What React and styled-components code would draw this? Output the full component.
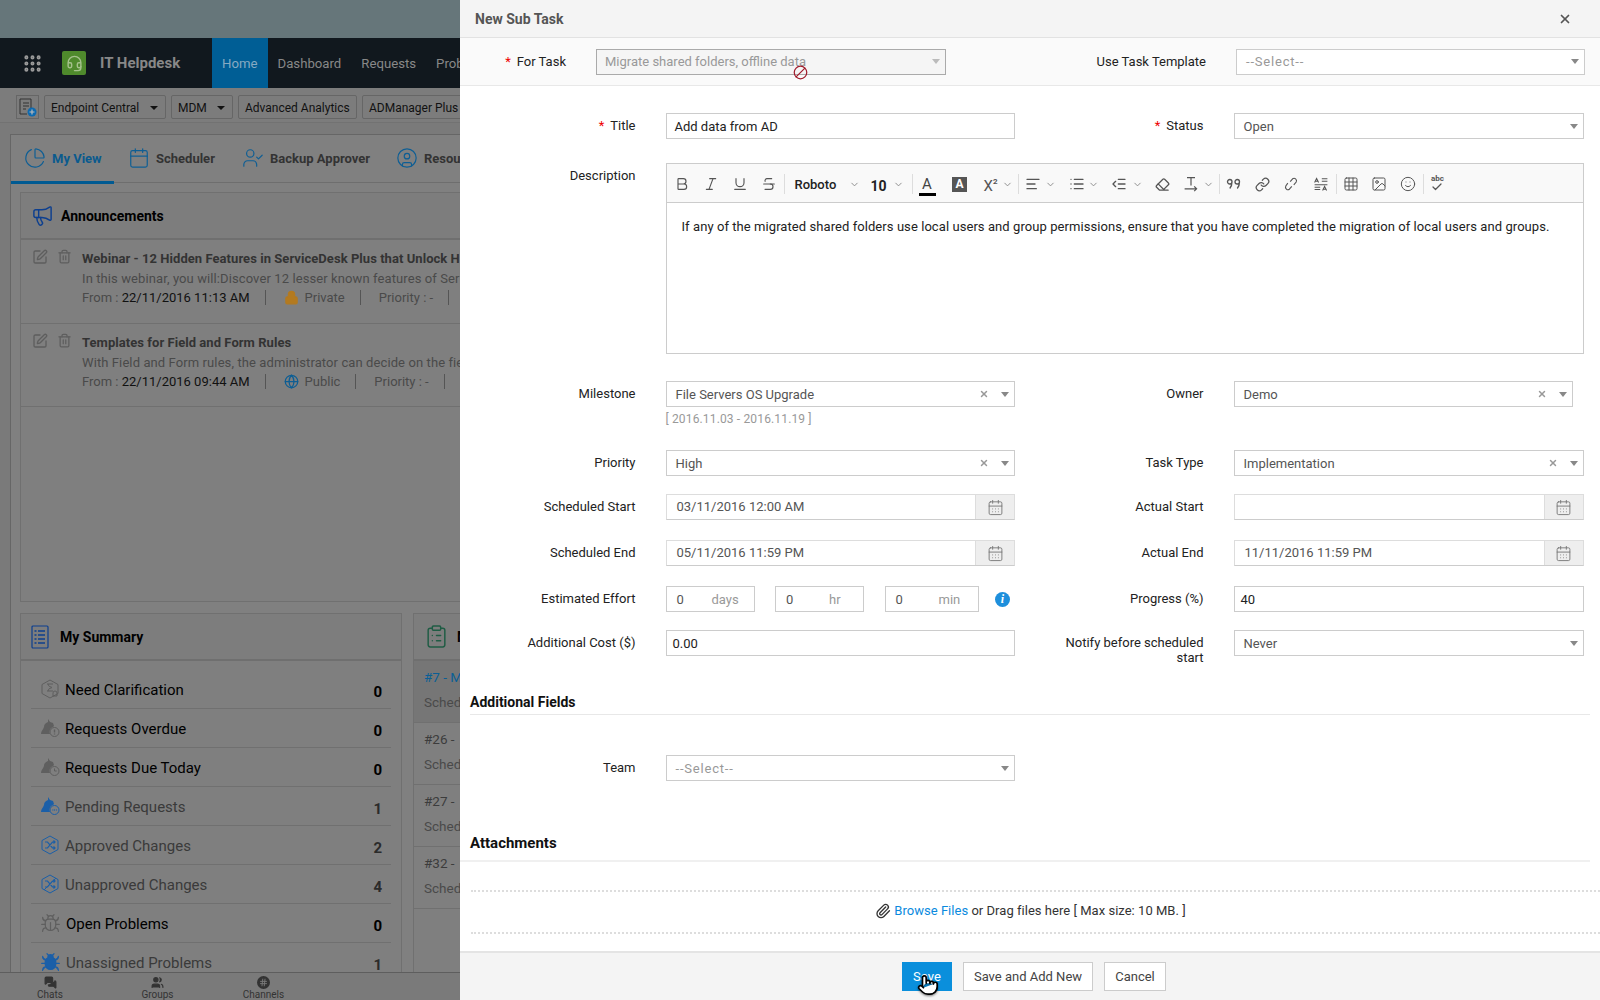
import styled, { createGlobalStyle } from 'styled-components'
import {
  Bold, Italic, Underline, Strikethrough, ChevronDown, AlignLeft, List, Outdent,
  Eraser, Link, Grid3x3, Image, Smile, Check, X, Ban, CalendarDays, Paperclip, Pointer,
  Grip, Headset, SquarePen, Trash2, Lock, Globe, ChartPie, Calendar, UserCheck, CircleUser, Megaphone,
  ClipboardList, MessagesSquare, Users, Hash, Bug,
} from 'lucide-react'

const GlobalStyle = createGlobalStyle`
  html, body { margin: 0; height: 100%; overflow: hidden; }
  body { font-family: Roboto, "Liberation Sans", sans-serif; font-size: 13px; color: #333; }
  * { box-sizing: border-box; }
`

const Screen = styled.div`
  display: flex;
  width: 1600px;
  height: 1000px;
  overflow: hidden;
`

/* ---- dimmed page behind the dialog ---- */

const Page = styled.div`
  display: flex;
  flex-direction: column;
  flex: none;
  width: 460px;
  height: 100%;
  overflow: hidden;
  background: #7a7a7a;
`
const TopBand = styled.div`
  flex: none;
  height: 38px;
  background: #66767a;
`
const Nav = styled.div`
  display: flex;
  flex: none;
  align-items: stretch;
  height: 50px;
  background: #11181e;
  color: #888;
  white-space: nowrap;
`
const NavGrid = styled.div`
  display: flex;
  flex: none;
  align-items: center;
  padding-left: 22px;
  width: 62px;
`
const NavBrand = styled.div`
  display: flex;
  flex: none;
  align-items: center;
  gap: 14px;
  width: 150px;
  font-size: 15px;
  font-weight: 700;
`
const LogoBox = styled.span`
  display: flex;
  align-items: center;
  justify-content: center;
  width: 24px;
  height: 24px;
  border-radius: 2px;
  background: #4f8a2c;
`
const NavItem = styled.div`
  display: flex;
  flex: none;
  align-items: center;
  padding: 0 ${(p) => (p.$last ? 0 : 10)}px 0 10px;
  font-size: 13.200px;
  color: ${(p) => (p.$active ? '#86aac2' : '#888')};
  background: ${(p) => (p.$active ? '#005e95' : 'transparent')};
`
const ShortcutBar = styled.div`
  display: flex;
  flex: none;
  align-items: flex-start;
  gap: 5px;
  height: 35px;
  padding: 7px 0 0 16px;
  background: #7c7c7c;
  border-bottom: 1px solid #727272;
`
const ShortcutIcon = styled.span`
  display: flex;
  flex: none;
  align-items: center;
  justify-content: center;
  width: 23px;
  height: 24px;
  border: 1px solid #666;
`
const Shortcut = styled.span`
  display: flex;
  flex: none;
  align-items: center;
  justify-content: space-between;
  width: ${(p) => p.$w}px;
  height: 24px;
  padding: 1px 7px 0 6px;
  border: 1px solid #666;
  border-radius: 2px;
  font-size: 12px;
  color: #111;
  white-space: nowrap;
`
const DarkCaret = styled.i`
  border-left: 4px solid transparent;
  border-right: 4px solid transparent;
  border-top: 4px solid #111;
`
const Body = styled.div`
  flex: 1;
  min-height: 0;
  padding: 11px 0 0 10px;
`
const TabCard = styled.div`
  width: 1000px;
  height: 100%;
  background: #808080;
  border: 1px solid #666;
  border-bottom: 0;
`
const Tabs = styled.div`
  display: flex;
  height: 48px;
  border-bottom: 1px solid #6e6e6e;
`
const Tab = styled.div`
  display: flex;
  flex: none;
  align-items: center;
  gap: 6px;
  width: ${(p) => p.$w}px;
  height: 49px;
  padding: 0 0 ${(p) => (p.$active ? 0 : 3)}px ${(p) => (p.$active ? 13 : 14)}px;
  font-size: 13px;
  font-weight: 700;
  color: ${(p) => (p.$active ? '#0a5a8e' : '#333')};
  border-bottom: ${(p) => (p.$active ? '3px solid #005a92' : '0')};
  white-space: nowrap;
  svg { color: #0e5e94; }
`
const Content = styled.div`
  display: flex;
  flex-direction: column;
  gap: 11px;
  height: 800px;
  padding: 9px 0 0 9px;
`
const Panel = styled.div`
  flex: none;
  overflow: hidden;
  width: ${(p) => (p.$w ? `${p.$w}px` : 'auto')};
  height: ${(p) => (p.$h ? `${p.$h}px` : 'auto')};
  background: #7f7f7f;
  border: 1px solid #707070;
`
const PanelHead = styled.div`
  display: flex;
  align-items: center;
  gap: ${(p) => p.$gap || 7}px;
  height: 47px;
  padding-left: 10px;
  background: #7d7d7d;
  border-bottom: 2px solid #6f6f6f;
  font-size: 14px;
  font-weight: 700;
  color: #000;
`
const Notice = styled.div`
  display: flex;
  height: ${(p) => p.$h}px;
  padding: 9px 0 0 11px;
  border-bottom: 1px solid #707070;
`
const NoticeTools = styled.div`
  display: flex;
  gap: 9px;
  width: 50px;
  color: #5e5e5e;
`
const NoticeText = styled.div`
  white-space: nowrap;
  line-height: 20px;
  color: #4a4a4a;
`
const NoticeTitle = styled.div`
  font-weight: 700;
  color: #333;
  letter-spacing: 0.050px;
`
const NoticeDesc = styled.div`
  letter-spacing: 0.100px;
`
const NoticeMeta = styled.div`
  display: flex;
  align-items: center;
  margin-top: 1px;
  b { font-weight: 400; color: #111; }
`
const MetaPart = styled.span`
  display: flex;
  align-items: center;
  gap: 6px;
  height: 15px;
  padding: 0 15px 0 ${(p) => (p.$first ? 0 : 18)}px;
  border-left: ${(p) => (p.$first ? '0' : '1px solid #555')};
`
const PanelRow = styled.div`
  display: flex;
  gap: 11px;
  height: 400px;
`
const SummaryList = styled.div`
  padding: 9px 10px 0;
`
const SummaryRow = styled.div`
  display: flex;
  align-items: center;
  height: 39px;
  padding: 0 9px;
  border-bottom: 1px solid #707070;
  font-size: 15px;
  color: ${(p) => (p.$zero ? '#000' : '#3a3a3a')};
  span { flex: 1; margin: 1px 0 0 5px; }
  b { font-weight: 700; margin-top: 5px; color: ${(p) => (p.$zero ? '#000' : '#2b2b2b')}; }
`
const TaskRow = styled.div`
  height: 62px;
  padding: 4px 0 0 10px;
  border-bottom: 1px solid #707070;
  background: ${(p) => (p.$active ? '#767676' : 'transparent')};
  color: #4a4a4a;
  line-height: 25px;
  font-size: 13.500px;
  p { margin: 0; color: ${(p) => (p.$active ? '#0a5f95' : '#3c3c3c')}; }
`
const BottomBar = styled.div`
  display: flex;
  flex: none;
  height: 28px;
  padding-left: 16px;
  background: #7a7a7a;
  border-top: 1px solid #5e5e5e;
`
const BottomItem = styled.div`
  display: flex;
  flex: none;
  flex-direction: column;
  align-items: center;
  width: ${(p) => p.$w}px;
  padding-top: 3px;
  font-size: 10px;
  line-height: 11px;
  color: #333;
`
const ChannelDot = styled.span`
  display: flex;
  align-items: center;
  justify-content: center;
  width: 13px;
  height: 13px;
  border-radius: 50%;
  background: #333;
  color: #7a7a7a;
`

/* ---- dialog ---- */

const Dialog = styled.div`
  display: flex;
  flex: none;
  flex-direction: column;
  width: 1140px;
  height: 100%;
  background: #fff;
`
const DialogHead = styled.div`
  display: flex;
  flex: none;
  align-items: center;
  justify-content: space-between;
  height: 38px;
  padding: 0 28px 0 15px;
  background: #f4f4f4;
  border-bottom: 1px solid #e2e2e2;
  font-size: 14px;
  font-weight: 700;
  color: #555;
  svg { color: #555; }
`
const TaskBar = styled.div`
  display: grid;
  flex: none;
  grid-template-columns: 106px 350px 230px 349px;
  align-items: center;
  column-gap: 30px;
  height: 48px;
  background: #fafafa;
  border-bottom: 1px solid #e8e8e8;
  em { margin-right: 4px; }
`
const Form = styled.div`
  flex: 1;
  min-height: 0;
  padding-top: 27px;
`
const Row = styled.div`
  display: grid;
  grid-template-columns: 175.500px 349.500px 158.500px 350px;
  column-gap: 30px;
  align-items: start;
  margin-top: ${(p) => p.$mt || 0}px;
`
const Label = styled.div`
  text-align: right;
  color: #222;
  line-height: ${(p) => (p.$wrap ? '15px' : '26px')};
  padding-top: ${(p) => (p.$wrap ? '5px' : '0')};
  em { font-style: normal; color: #e00; margin-right: 6px; }
`
const Cell = styled.div`
  min-width: 0;
  padding-right: ${(p) => p.$pr || 0}px;
`
const SelectBox = styled.div`
  position: relative;
  display: flex;
  align-items: center;
  height: 26px;
  padding-left: ${(p) => (p.$disabled ? 8 : 9)}px;
  background: ${(p) => (p.$disabled ? '#f5f5f5' : '#fff')};
  border: 1px solid ${(p) => (p.$disabled ? '#aaa' : '#ccc')};
  color: ${(p) => (p.$disabled || p.$placeholder ? '#999' : '#555')};
`
const SelectValue = styled.span`
  flex: 1;
  letter-spacing: ${(p) => (p.$placeholder ? '0.800px' : '0')};
`
const ClearMark = styled.span`
  display: flex;
  margin-right: 12px;
  color: #999;
`
const Caret = styled.i`
  margin-right: 5px;
  border-left: 4px solid transparent;
  border-right: 4px solid transparent;
  border-top: 5px solid ${(p) => (p.$light ? '#bbb' : '#888')};
`
const NoEntry = styled.span`
  position: absolute;
  left: 196px;
  top: 15px;
  display: flex;
  color: #a01c2c;
  transform: scaleX(-1);
`
const TextBox = styled.div`
  display: flex;
  align-items: center;
  height: 26px;
  padding-left: ${(p) => p.$pl || 6}px;
  border: 1px solid #ccc;
  color: #222;
`
const Hint = styled.div`
  margin-top: 4px;
  line-height: 16px;
  font-size: 12px;
  letter-spacing: 0.150px;
  color: #999;
`
const DateBox = styled.div`
  display: flex;
  height: 26px;
  border: 1px solid #ddd;
  border-bottom-color: #ccc;
  color: #555;
`
const DateValue = styled.span`
  flex: 1;
  padding-left: 10px;
  line-height: 24px;
`
const DateButton = styled.span`
  display: flex;
  align-items: center;
  justify-content: center;
  width: 39px;
  background: #eee;
  border-left: 1px solid #ddd;
  color: #777;
`
const EffortRow = styled.div`
  display: flex;
  align-items: center;
  gap: 20.500px;
`
const EffortBox = styled.div`
  display: flex;
  align-items: center;
  width: ${(p) => p.$w}px;
  height: 26px;
  padding-left: 10px;
  border: 1px solid #ccc;
  color: #555;
  span { width: ${(p) => p.$gap}px; }
  u { text-decoration: none; color: #999; }
`
const InfoDot = styled.span`
  display: flex;
  align-items: center;
  justify-content: center;
  width: 15px;
  height: 15px;
  margin-left: -4px;
  border-radius: 50%;
  background: #1e8fdc;
  color: #fff;
  font: italic 700 12px "Liberation Serif", serif;
`
const Editor = styled.div`
  height: 191px;
  margin-right: -568.500px;
  border: 1px solid #ccc;
`
const EditorBar = styled.div`
  display: flex;
  align-items: center;
  height: 39px;
  padding: 2px 0 0 1px;
  background: #f9f9f9;
  border-bottom: 1px solid #ccc;
  color: #555;
`
const Tool = styled.span`
  display: flex;
  flex: none;
  align-items: center;
  justify-content: center;
  width: ${(p) => p.$w || 29}px;
`
const Drop = styled.span`
  display: flex;
  flex: none;
  align-items: center;
  justify-content: space-between;
  width: ${(p) => p.$w}px;
  padding: 0 ${(p) => p.$pr}px 0 ${(p) => p.$pl}px;
  font-weight: ${(p) => p.$weight || 400};
  font-size: ${(p) => p.$size || 13}px;
  color: #222;
  svg:last-child { color: #888; }
`
const SizeValue = styled.span`
  margin-top: 3px;
`
const Sep = styled.i`
  flex: none;
  width: 1px;
  height: 20px;
  background: #ddd;
`
const ColorA = styled.span`
  width: 17px;
  height: 20px;
  margin-top: 3px;
  text-align: center;
  font-size: 15px;
  line-height: 17px;
  color: #444;
  border-bottom: 3px solid #000;
`
const FillA = styled.span`
  width: 15px;
  height: 15px;
  text-align: center;
  font-size: 12px;
  font-weight: 700;
  line-height: 15px;
  background: #555;
  color: #fff;
`
const SuperX = styled.span`
  margin: 3px 0 0 4px;
  font-size: 15px;
  line-height: 18px;
  color: #555;
  sup { font-size: 8px; font-weight: 700; line-height: 0; vertical-align: 7px; }
`
const SpellMark = styled.span`
  display: flex;
  flex-direction: column;
  align-items: center;
  font-size: 8px;
  font-weight: 700;
  line-height: 8px;
  svg { margin-top: -2px; }
`
const EditorText = styled.div`
  padding: 15px;
  line-height: 18px;
  letter-spacing: 0.070px;
  color: #222;
`
const SectionHead = styled.div`
  margin: ${(p) => p.$mt}px 10px 0 ${(p) => (p.$full ? 0 : 10)}px;
  padding: 0 0 ${(p) => p.$pb}px ${(p) => (p.$full ? 10 : 0)}px;
  line-height: 20px;
  font-size: ${(p) => (p.$full ? 15 : 14)}px;
  font-weight: 700;
  color: #111;
  border-bottom: ${(p) => (p.$full ? '2px solid #f0f0f0' : '1px solid #e8e8e8')};
`
const DropZone = styled.div`
  display: flex;
  align-items: center;
  justify-content: center;
  gap: 3px;
  height: 44px;
  margin: 28px 0 0 11px;
  padding: 0 10px 3px 0;
  border-top: 2px dotted #ddd;
  border-bottom: 2px dotted #ddd;
  letter-spacing: 0.030px;
  color: #333;
  a { color: #0b8ade; }
`
const Footer = styled.div`
  display: flex;
  flex: none;
  align-items: center;
  gap: 11px;
  height: 49px;
  padding-left: 442px;
  background: #f4f4f4;
  border-top: 2px solid #e4e4e4;
`
const Button = styled.span`
  position: relative;
  display: flex;
  align-items: center;
  justify-content: center;
  width: ${(p) => p.$w}px;
  height: 29px;
  color: ${(p) => (p.$primary ? '#fff' : '#444')};
  background: ${(p) => (p.$primary ? '#0a8fdc' : '#fff')};
  border: 1px solid ${(p) => (p.$primary ? '#0a8fdc' : '#ccc')};
`
const HandCursor = styled.span`
  position: absolute;
  left: 14px;
  top: 11px;
  display: flex;
  color: #000;
  filter: drop-shadow(0 1px 1px rgba(0, 0, 0, 0.5));
  svg { fill: #fff; }
`

const sum = [
  ['Need Clarification', 0, 'hour'],
  ['Requests Overdue', 0, 'alert'],
  ['Requests Due Today', 0, 'clock'],
  ['Pending Requests', 1, 'pending'],
  ['Approved Changes', 2, 'shuffle'],
  ['Unapproved Changes', 4, 'unshuffle'],
  ['Open Problems', 0, 'bug'],
  ['Unassigned Problems', 1, 'bugfill'],
]

const grey = '#5f5f5f'
const blue = '#1b5fa8'

function SummaryIcon({ kind }) {
  if (kind === 'shuffle' || kind === 'unshuffle' || kind === 'hour') {
    const color = kind === 'hour' ? grey : blue
    return (
      <svg width="20" height="20" viewBox="0 0 20 20" fill="none" stroke={color} strokeWidth="1">
        <path d="M10 1l8 4.500v9L10 19l-8-4.500v-9z" />
        {kind === 'hour' ? (
          <path d="M7 5h6M7 12h6M8 5c0 3 4 3 4 3.500S8 9 8 12M13 14a2 2 0 1 1 4 0v3h-4z" />
        ) : (
          <path d="M5 7h2.500l5 6H15M5 13h2.500l5-6H15M13.500 5.500L15 7l-1.500 1.500M13.500 11.500L15 13l-1.500 1.500" strokeWidth="1.200" />
        )}
        {kind === 'unshuffle' && <path d="M4 16L16 4" />}
      </svg>
    )
  }
  if (kind === 'bug' || kind === 'bugfill') {
    const filled = kind === 'bugfill'
    return <Bug size={21} color={filled ? blue : grey} fill={filled ? blue : 'none'} strokeWidth={1.400} />
  }
  const color = kind === 'pending' ? blue : grey
  return (
    <svg width="20" height="20" viewBox="0 0 20 20">
      <path d="M8 1l2 3 3 1 1 3-1 1a5 5 0 0 0-3 7H1c0-3 2-4 3-7 0-3 2-4 4-5z" fill={color} />
      <circle cx="14.500" cy="14" r="4.500" fill="#7f7f7f" stroke={color} />
      {kind === 'alert' && <path d="M14.500 11.500v3M14.500 15.500v1" stroke={color} strokeWidth="1.400" />}
      {kind === 'clock' && <path d="M14.500 11.500V14h2.200" stroke={color} fill="none" />}
      {kind === 'pending' && <path d="M12.500 14h.8M14.200 14h.8M15.900 14h.8" stroke={color} strokeWidth="1.400" />}
    </svg>
  )
}

function PageBehind() {
  return (
    <Page>
      <TopBand />
      <Nav>
        <NavGrid><Grip size={21} color="#999" strokeWidth={2.600} /></NavGrid>
        <NavBrand>
          <LogoBox><Headset size={17} color="#a5c18c" /></LogoBox>
          IT Helpdesk
        </NavBrand>
        <NavItem $active>Home</NavItem>
        <NavItem>Dashboard</NavItem>
        <NavItem>Requests</NavItem>
        <NavItem $last>Prob</NavItem>
      </Nav>
      <ShortcutBar>
        <ShortcutIcon>
          <svg width="19" height="19" viewBox="0 0 19 19" fill="none" stroke="#333" strokeWidth="1">
            <path d="M2 1h11v9M2 1v15h7M5 5h6M5 8h6M5 11h3" />
            <circle cx="14" cy="14" r="4.500" fill="#0e6ab0" stroke="none" />
            <path d="M14 11.500v5M11.500 14h5" stroke="#bbb" strokeWidth="1.200" />
          </svg>
        </ShortcutIcon>
        <Shortcut $w={122}>Endpoint Central <DarkCaret /></Shortcut>
        <Shortcut $w={62}>MDM <DarkCaret /></Shortcut>
        <Shortcut $w={119}>Advanced Analytics</Shortcut>
        <Shortcut $w={120}>ADManager Plus</Shortcut>
      </ShortcutBar>
      <Body>
        <TabCard>
          <Tabs>
            <Tab $active $w={103}><ChartPie size={22} strokeWidth={1.300} />My View</Tab>
            <Tab $w={114}><Calendar size={22} strokeWidth={1.300} />Scheduler</Tab>
            <Tab $w={154}><UserCheck size={22} strokeWidth={1.300} />Backup Approver</Tab>
            <Tab $w={80}><CircleUser size={22} strokeWidth={1.300} />Resou</Tab>
          </Tabs>
          <Content>
            <Panel $h={410}>
              <PanelHead><Megaphone size={23} color="#0d3f8f" strokeWidth={1.500} />Announcements</PanelHead>
              <Notice $h={84}>
                <NoticeTools><SquarePen size={16} /><Trash2 size={15} /></NoticeTools>
                <NoticeText>
                  <NoticeTitle>Webinar - 12 Hidden Features in ServiceDesk Plus that Unlock H</NoticeTitle>
                  <NoticeDesc>In this webinar, you will:Discover 12 lesser known features of Ser</NoticeDesc>
                  <NoticeMeta>
                    <MetaPart $first><span>From : <b>22/11/2016 11:13 AM</b></span></MetaPart>
                    <MetaPart><Lock size={15} color="#b37a20" fill="#b37a20" />Private</MetaPart>
                    <MetaPart>Priority : -</MetaPart>
                    <MetaPart />
                  </NoticeMeta>
                </NoticeText>
              </Notice>
              <Notice $h={83}>
                <NoticeTools><SquarePen size={16} /><Trash2 size={15} /></NoticeTools>
                <NoticeText>
                  <NoticeTitle>Templates for Field and Form Rules</NoticeTitle>
                  <NoticeDesc>With Field and Form rules, the administrator can decide on the fie</NoticeDesc>
                  <NoticeMeta>
                    <MetaPart $first><span>From : <b>22/11/2016 09:44 AM</b></span></MetaPart>
                    <MetaPart><Globe size={15} color="#0e5e94" />Public</MetaPart>
                    <MetaPart>Priority : -</MetaPart>
                    <MetaPart />
                  </NoticeMeta>
                </NoticeText>
              </Notice>
            </Panel>
            <PanelRow>
              <Panel $w={382}>
                <PanelHead $gap={10}>
                  <svg width="19" height="24" viewBox="0 0 19 24" fill="none" stroke="#0d3f8f" strokeWidth="1.200">
                    <rect x="1" y="1" width="16" height="22" rx="1" />
                    <path d="M3.500 6h2M7 6h7M3.500 10h2M7 10h7M3.500 14h2M7 14h7M3.500 18h2M7 18h7" strokeWidth="1.500" />
                  </svg>
                  My Summary
                </PanelHead>
                <SummaryList>
                  {sum.map(([name, count, kind]) => (
                    <SummaryRow key={name} $zero={count === 0}>
                      <SummaryIcon kind={kind} />
                      <span>{name}</span>
                      <b>{count}</b>
                    </SummaryRow>
                  ))}
                </SummaryList>
              </Panel>
              <Panel $w={100}>
                <PanelHead $gap={8}><ClipboardList size={25} color="#1f5c44" strokeWidth={1.400} />M</PanelHead>
                <TaskRow $active><p>#7 - M</p>Sched</TaskRow>
                <TaskRow><p>#26 -</p>Sched</TaskRow>
                <TaskRow><p>#27 -</p>Sched</TaskRow>
                <TaskRow><p>#32 -</p>Sched</TaskRow>
              </Panel>
            </PanelRow>
          </Content>
        </TabCard>
      </Body>
      <BottomBar>
        <BottomItem $w={68}><MessagesSquare size={13} fill="#333" />Chats</BottomItem>
        <BottomItem $w={147}><Users size={13} fill="#333" />Groups</BottomItem>
        <BottomItem $w={65}><ChannelDot><Hash size={9} strokeWidth={2.500} /></ChannelDot>Channels</BottomItem>
      </BottomBar>
    </Page>
  )
}

function Select({ value, disabled, placeholder, clear, children }) {
  return (
    <SelectBox $disabled={disabled} $placeholder={placeholder}>
      <SelectValue $placeholder={placeholder}>{value}</SelectValue>
      {clear && <ClearMark><X size={10} strokeWidth={3.500} /></ClearMark>}
      <Caret $light={disabled} />
      {children}
    </SelectBox>
  )
}

function DateField({ value }) {
  return (
    <DateBox>
      <DateValue>{value}</DateValue>
      <DateButton><CalendarDays size={17} strokeWidth={1.300} /></DateButton>
    </DateBox>
  )
}

const chev = <ChevronDown size={11} />

function EditorToolbar() {
  return (
    <EditorBar>
      <Tool><Bold size={16} strokeWidth={1.700} /></Tool>
      <Tool><Italic size={16} strokeWidth={1.700} /></Tool>
      <Tool><Underline size={16} strokeWidth={1.700} /></Tool>
      <Tool><Strikethrough size={16} strokeWidth={1.700} /></Tool>
      <Sep />
      <Drop $w={79} $pl={10} $pr={4} $weight={500}>Roboto {chev}</Drop>
      <Drop $w={48} $pl={7} $pr={8} $weight={700} $size={14}><SizeValue>10</SizeValue>{chev}</Drop>
      <Sep />
      <Tool><ColorA>A</ColorA></Tool>
      <Tool $w={36}><FillA>A</FillA></Tool>
      <Drop $w={40} $pl={2} $pr={5}><SuperX>X<sup>2</sup></SuperX>{chev}</Drop>
      <Sep />
      <Drop $w={44} $pl={6} $pr={7}><AlignLeft size={16} color="#555" />{chev}</Drop>
      <Drop $w={44} $pl={6} $pr={8}><List size={16} color="#555" />{chev}</Drop>
      <Drop $w={42} $pl={4} $pr={6}><Outdent size={16} color="#555" />{chev}</Drop>
      <Tool $w={28}><Eraser size={15} /></Tool>
      <Drop $w={42} $pl={6} $pr={5}>
        <svg width="16" height="16" viewBox="0 0 20 20" fill="none" stroke="#555" strokeWidth="1.500">
          <path d="M5 2h10M10 2v10M2 16h15M14 13l3 3-3 3" />
        </svg>
        {chev}
      </Drop>
      <Sep />
      <Tool $w={28}>
        <svg width="15" height="12" viewBox="0 0 20 16" fill="none" stroke="#555" strokeWidth="1.800">
          <path d="M8 5a3 3 0 1 1-6 0 3 3 0 0 1 6 0c0 4-1 7-3 9M18 5a3 3 0 1 1-6 0 3 3 0 0 1 6 0c0 4-1 7-3 9" />
        </svg>
      </Tool>
      <Tool><Link size={15} /></Tool>
      <Tool>
        <svg width="16" height="16" viewBox="0 0 20 20" fill="none" stroke="#555" strokeWidth="1.400">
          <path d="M9 7l3-3.500c2.500-2 6 1 4.500 4L13.500 11M11 13l-3 3.500c-2.500 2-6-1-4.500-4L6 9" />
        </svg>
      </Tool>
      <Tool $w={30}>
        <svg width="16" height="16" viewBox="0 0 20 20" fill="none" stroke="#555" strokeWidth="1.300">
          <path d="M2 8l2.500-5L7 8M3 6.500h3M11 3.500h7M11 6.500h7M2 11h16M2 14h7M2 17h7M12 18l2.500-5 2.500 5M13 16.500h3" />
        </svg>
      </Tool>
      <Sep />
      <Tool $w={28}><Grid3x3 size={16} strokeWidth={1.500} /></Tool>
      <Tool><Image size={16} strokeWidth={1.500} /></Tool>
      <Tool><Smile size={16} strokeWidth={1.500} /></Tool>
      <Sep />
      <Tool $w={28}><SpellMark>abc<Check size={12} strokeWidth={2.500} /></SpellMark></Tool>
    </EditorBar>
  )
}

function App() {
  return (
    <Screen>
      <GlobalStyle />
      <PageBehind />
      <Dialog>
        <DialogHead>New Sub Task <X size={14} strokeWidth={3} /></DialogHead>
        <TaskBar>
          <Label><em>*</em>For Task</Label>
          <Select value="Migrate shared folders, offline data" disabled>
            <NoEntry><Ban size={15} strokeWidth={2} /></NoEntry>
          </Select>
          <Label>Use Task Template</Label>
          <Select value="--Select--" placeholder />
        </TaskBar>
        <Form>
          <Row>
            <Label><em>*</em>Title</Label>
            <TextBox $pl={8}>Add data from AD</TextBox>
            <Label><em>*</em>Status</Label>
            <Select value="Open" />
          </Row>
          <Row $mt={24}>
            <Label>Description</Label>
            <Editor>
              <EditorToolbar />
              <EditorText>If any of the migrated shared folders use local users and group permissions, ensure that you have completed the migration of local users and groups.</EditorText>
            </Editor>
          </Row>
          <Row $mt={27}>
            <Label>Milestone</Label>
            <Cell>
              <Select value="File Servers OS Upgrade" clear />
              <Hint>[ 2016.11.03 - 2016.11.19 ]</Hint>
            </Cell>
            <Label>Owner</Label>
            <Cell $pr={11}><Select value="Demo" clear /></Cell>
          </Row>
          <Row $mt={23}>
            <Label>Priority</Label>
            <Select value="High" clear />
            <Label>Task Type</Label>
            <Select value="Implementation" clear />
          </Row>
          <Row $mt={18}>
            <Label>Scheduled Start</Label>
            <DateField value="03/11/2016 12:00 AM" />
            <Label>Actual Start</Label>
            <DateField value="" />
          </Row>
          <Row $mt={20}>
            <Label>Scheduled End</Label>
            <DateField value="05/11/2016 11:59 PM" />
            <Label>Actual End</Label>
            <DateField value="11/11/2016 11:59 PM" />
          </Row>
          <Row $mt={20}>
            <Label>Estimated Effort</Label>
            <EffortRow>
              <EffortBox $w={89} $gap={35}><span>0</span><u>days</u></EffortBox>
              <EffortBox $w={89} $gap={43}><span>0</span><u>hr</u></EffortBox>
              <EffortBox $w={94} $gap={43}><span>0</span><u>min</u></EffortBox>
              <InfoDot>i</InfoDot>
            </EffortRow>
            <Label>Progress (%)</Label>
            <TextBox>40</TextBox>
          </Row>
          <Row $mt={18}>
            <Label>Additional Cost ($)</Label>
            <TextBox>0.00</TextBox>
            <Label $wrap>Notify before scheduled start</Label>
            <Select value="Never" />
          </Row>
          <SectionHead $mt={27} $pb={2}>Additional Fields</SectionHead>
          <Row $mt={40}>
            <Label>Team</Label>
            <Select value="--Select--" placeholder />
          </Row>
          <SectionHead $mt={52} $pb={7} $full>Attachments</SectionHead>
          <DropZone>
            <Paperclip size={16} color="#333" />
            <span><a>Browse Files</a> or Drag files here [ Max size: 10 MB. ]</span>
          </DropZone>
        </Form>
        <Footer>
          <Button $primary $w={50}>
            Save
            <HandCursor><Pointer size={22} strokeWidth={1.800} /></HandCursor>
          </Button>
          <Button $w={130}>Save and Add New</Button>
          <Button $w={62}>Cancel</Button>
        </Footer>
      </Dialog>
    </Screen>
  )
}

export default App
